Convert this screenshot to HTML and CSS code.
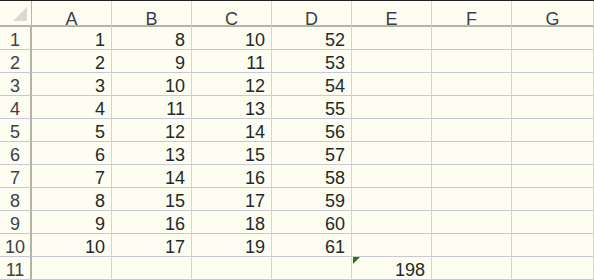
FILE: index.html
```html
<!DOCTYPE html>
<html lang="zh-cn">
<head>
  <meta charset="UTF-8">
  <title>Sheet</title>
  <link rel="stylesheet" href="styles.css">
</head>
<body>
  <div class="sheet">
    <div class="corner"><span class="tri"></span></div>
    <div class="colhead">A</div>
    <div class="colhead">B</div>
    <div class="colhead">C</div>
    <div class="colhead">D</div>
    <div class="colhead">E</div>
    <div class="colhead">F</div>
    <div class="colhead">G</div>

    <div class="rowhead">1</div><div class="cell">1</div><div class="cell">8</div><div class="cell">10</div><div class="cell">52</div><div class="cell"></div><div class="cell"></div><div class="cell"></div>
    <div class="rowhead">2</div><div class="cell">2</div><div class="cell">9</div><div class="cell">11</div><div class="cell">53</div><div class="cell"></div><div class="cell"></div><div class="cell"></div>
    <div class="rowhead">3</div><div class="cell">3</div><div class="cell">10</div><div class="cell">12</div><div class="cell">54</div><div class="cell"></div><div class="cell"></div><div class="cell"></div>
    <div class="rowhead">4</div><div class="cell">4</div><div class="cell">11</div><div class="cell">13</div><div class="cell">55</div><div class="cell"></div><div class="cell"></div><div class="cell"></div>
    <div class="rowhead">5</div><div class="cell">5</div><div class="cell">12</div><div class="cell">14</div><div class="cell">56</div><div class="cell"></div><div class="cell"></div><div class="cell"></div>
    <div class="rowhead">6</div><div class="cell">6</div><div class="cell">13</div><div class="cell">15</div><div class="cell">57</div><div class="cell"></div><div class="cell"></div><div class="cell"></div>
    <div class="rowhead">7</div><div class="cell">7</div><div class="cell">14</div><div class="cell">16</div><div class="cell">58</div><div class="cell"></div><div class="cell"></div><div class="cell"></div>
    <div class="rowhead">8</div><div class="cell">8</div><div class="cell">15</div><div class="cell">17</div><div class="cell">59</div><div class="cell"></div><div class="cell"></div><div class="cell"></div>
    <div class="rowhead">9</div><div class="cell">9</div><div class="cell">16</div><div class="cell">18</div><div class="cell">60</div><div class="cell"></div><div class="cell"></div><div class="cell"></div>
    <div class="rowhead">10</div><div class="cell">10</div><div class="cell">17</div><div class="cell">19</div><div class="cell">61</div><div class="cell"></div><div class="cell"></div><div class="cell"></div>
    <div class="rowhead">11</div><div class="cell"></div><div class="cell"></div><div class="cell"></div><div class="cell"></div><div class="cell formula">198</div><div class="cell"></div><div class="cell"></div>
  </div>
</body>
</html>
```

FILE: styles.css
```css
body {
  margin: 0;
  background-color: #fdfdf1;
  font-family: "Liberation Sans", Arial, sans-serif;
  overflow: hidden;
}

.sheet {
  display: grid;
  grid-template-columns: 32px repeat(6, 80px) 82px;
  grid-template-rows: 26px repeat(11, 23px);
  border-top: 1px solid #222;
  width: 594px;
}

.corner,
.colhead,
.rowhead,
.cell {
  box-sizing: border-box;
  font-size: 18px;
  line-height: 18px;
}

.corner {
  position: relative;
  border-right: 1px solid #b4b4a8;
  border-bottom: 2px solid #b4b4a8;
}

.tri {
  position: absolute;
  right: 4px;
  bottom: 4px;
  width: 0;
  height: 0;
  border-left: 14px solid transparent;
  border-bottom: 14px solid #dadad2;
}

.colhead {
  text-align: center;
  color: #3c4048;
  padding-top: 9px;
  border-right: 1px solid #d6d6c4;
  border-bottom: 2px solid #b4b4a8;
}

.rowhead {
  text-align: center;
  color: #3c4048;
  padding-top: 4px;
  border-right: 2px solid #b4b4a8;
  border-bottom: 1px solid #c8c8d4;
}

.cell {
  text-align: right;
  color: #1e2a2a;
  padding-top: 4px;
  padding-right: 6px;
  border-right: 1px solid #d6d6c4;
  border-bottom: 1px solid #c8c8d4;
}

.formula {
  position: relative;
}

.formula::before {
  content: "";
  position: absolute;
  left: 1px;
  top: 0;
  width: 0;
  height: 0;
  border-top: 7px solid #1e7a1e;
  border-right: 7px solid transparent;
}
```
